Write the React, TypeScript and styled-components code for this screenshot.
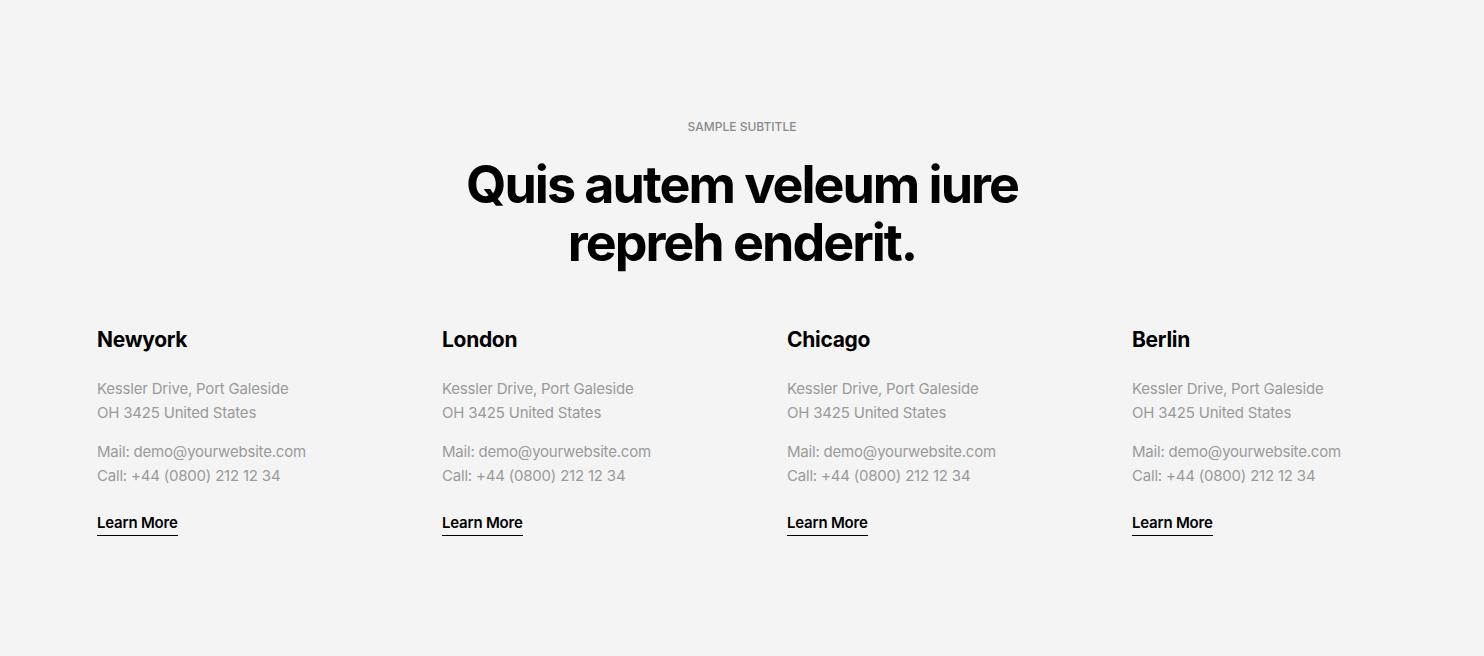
import React from "react";
import styled, { createGlobalStyle } from "styled-components";

const Global = createGlobalStyle`
  html, body { margin: 0; padding: 0; background: #f4f4f4; }
  body { font-family: Inter, "Noto Sans", sans-serif; -webkit-font-smoothing: antialiased; }
  * { box-sizing: border-box; }
`;

const Section = styled.section`
  background: #f4f4f4;
  min-height: 656px;
  padding: 119px 0 0;
`;

const Header = styled.header`
  display: flex;
  flex-direction: column;
  align-items: center;
  text-align: center;
`;

const Subtitle = styled.div`
  font-size: 12px;
  line-height: 16px;
  color: #8a8a8a;
  text-transform: uppercase;
  letter-spacing: 0;
  font-weight: 500;
`;

const Title = styled.h2`
  margin: 21px 0 0;
  font-size: 52px;
  line-height: 58px;
  font-weight: 700;
  letter-spacing: -2px;
  color: #000;
  max-width: 600px;
`;

const Grid = styled.div`
  display: grid;
  grid-template-columns: repeat(4, 345px);
  padding-left: 97px;
  margin-top: 53px;
`;

const Card = styled.div`
  display: flex;
  flex-direction: column;
  align-items: flex-start;
`;

const City = styled.h3`
  margin: 0;
  font-size: 21px;
  line-height: 30px;
  font-weight: 650;
  letter-spacing: -0.3px;
  color: #000;
`;

const Para = styled.p<{ $gap: number }>`
  margin: ${(p) => p.$gap}px 0 0;
  font-size: 15px;
  line-height: 24px;
  color: #9a9a9a;
  letter-spacing: -0.2px;
`;

const More = styled.a`
  margin-top: 25px;
  font-size: 15px;
  line-height: 20px;
  font-weight: 600;
  color: #000;
  text-decoration: none;
  border-bottom: 1px solid #000;
  padding-bottom: 2px;
  letter-spacing: -0.2px;
`;

const cities = ["Newyork", "London", "Chicago", "Berlin"];

export default function App() {
  return (
    <>
      <Global />
      <Section>
        <Header>
          <Subtitle>Sample Subtitle</Subtitle>
          <Title>Quis autem veleum iure repreh enderit.</Title>
        </Header>
        <Grid>
          {cities.map((c) => (
            <Card key={c}>
              <City>{c}</City>
              <Para $gap={22}>
                Kessler Drive, Port Galeside
                <br />
                OH 3425 United States
              </Para>
              <Para $gap={15}>
                Mail: demo@yourwebsite.com
                <br />
                Call: +44 (0800) 212 12 34
              </Para>
              <More href="#">Learn More</More>
            </Card>
          ))}
        </Grid>
      </Section>
    </>
  );
}
